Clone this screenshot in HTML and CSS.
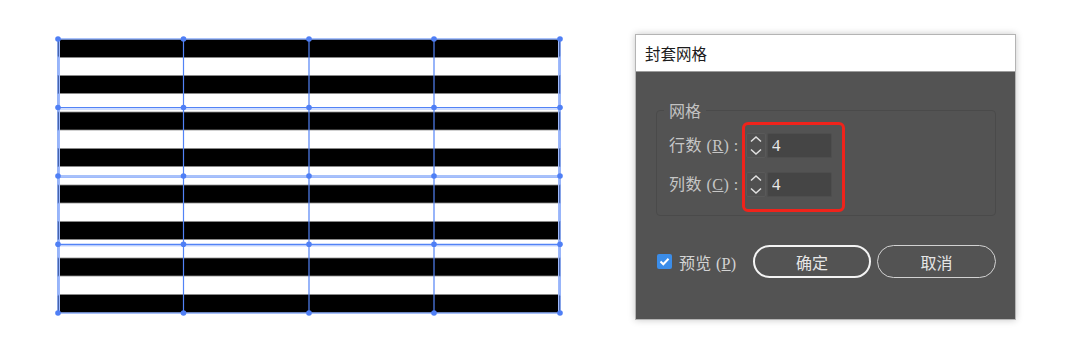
FILE: index.html
```html
<!DOCTYPE html>
<html lang="zh-CN">

<head>
    <meta charset="UTF-8">
    <meta name="viewport" content="width=device-width, initial-scale=1.0">
    <title>封套网格</title>
    <link rel="stylesheet" href="styles.css">
</head>

<body>
    <div class="canvas">
        <svg width="510" height="282" viewBox="-4 -4 510 282">
            <g fill="#000" stroke="#8c8c8c" stroke-width="0.8">
                <rect x="0" y="0.5" width="502" height="18" rx="2"></rect>
                <rect x="0" y="36.5" width="502" height="18"></rect>
                <rect x="0" y="73" width="502" height="18"></rect>
                <rect x="0" y="109.5" width="502" height="18"></rect>
                <rect x="0" y="146" width="502" height="18"></rect>
                <rect x="0" y="182.5" width="502" height="18"></rect>
                <rect x="0" y="219" width="502" height="18"></rect>
                <rect x="0" y="255.5" width="502" height="18" rx="2"></rect>
            </g>
            <g stroke="#9fbafc" stroke-width="1">
                <line x1="0" y1="70" x2="502" y2="70"></line>
                <line x1="0" y1="138.5" x2="502" y2="138.5"></line>
                <line x1="0" y1="206.8" x2="502" y2="206.8"></line>
                <line x1="1.5" y1="0" x2="1.5" y2="274"></line>
                <line x1="500.5" y1="0" x2="500.5" y2="274"></line>
            </g>
            <g stroke="#5283f6" stroke-width="1.2">
                <line x1="0" y1="0" x2="502" y2="0"></line>
                <line x1="0" y1="68.5" x2="502" y2="68.5"></line>
                <line x1="0" y1="137" x2="502" y2="137"></line>
                <line x1="0" y1="205.3" x2="502" y2="205.3"></line>
                <line x1="0" y1="274" x2="502" y2="274"></line>
                <line x1="0" y1="0" x2="0" y2="274"></line>
                <line x1="125.5" y1="0" x2="125.5" y2="274"></line>
                <line x1="251" y1="0" x2="251" y2="274"></line>
                <line x1="376" y1="0" x2="376" y2="274"></line>
                <line x1="502" y1="0" x2="502" y2="274"></line>
            </g>
            <g fill="#4f7ff5" id="dots"></g>
        </svg>
    </div>

    <div class="dialog">
        <div class="title">封套网格</div>
        <div class="panel">
            <fieldset class="group">
                <legend>网格</legend>
                <div class="grid-form">
                    <div class="labels">
                        <label>行数 (<u>R</u>)&nbsp;:</label>
                        <label>列数 (<u>C</u>)&nbsp;:</label>
                    </div>
                    <div class="mark">
                        <div class="control">
                            <span class="spin">
                                <svg width="20" height="25" viewBox="0 0 20 25">
                                    <path d="M5 8.5 L10 4 L15 8.5 M5 16.5 L10 21 L15 16.5" fill="none" stroke="#e2e2e2" stroke-width="1.5"></path>
                                </svg>
                            </span>
                            <input class="num" type="text" value="4">
                        </div>
                        <div class="control">
                            <span class="spin">
                                <svg width="20" height="25" viewBox="0 0 20 25">
                                    <path d="M5 8.5 L10 4 L15 8.5 M5 16.5 L10 21 L15 16.5" fill="none" stroke="#e2e2e2" stroke-width="1.5"></path>
                                </svg>
                            </span>
                            <input class="num" type="text" value="4">
                        </div>
                    </div>
                </div>
            </fieldset>
            <div class="actions">
                <div class="preview">
                    <span class="check">
                        <svg width="15" height="15" viewBox="0 0 15 15">
                            <path d="M3.5 7.5 L6.3 10.3 L11.5 4.8" fill="none" stroke="#fff" stroke-width="2"></path>
                        </svg>
                    </span>
                    <span class="preview-text">预览 (<u>P</u>)</span>
                </div>
                <button class="btn btn-ok">确定</button>
                <button class="btn btn-cancel">取消</button>
            </div>
        </div>
    </div>

    <script>
        const xs = [0, 125.5, 251, 376, 502];
        const ys = [0, 68.5, 137, 205.3, 274];
        const dots = document.getElementById('dots');
        ys.forEach(y => {
            xs.forEach(x => {
                const dot = document.createElementNS('http://www.w3.org/2000/svg', 'circle');
                dot.setAttribute('cx', x);
                dot.setAttribute('cy', y);
                dot.setAttribute('r', 2.8);
                dots.appendChild(dot);
            })
        })
    </script>
</body>

</html>
```

FILE: styles.css
```css
body {
    margin: 0;
    height: 349px;
    display: flex;
    align-items: flex-start;
    background-color: #fff;
    font-family: "Liberation Serif", "Noto Sans CJK SC", serif;
}

.canvas {
    margin: 35px 0 0 54px;
}

.canvas svg {
    display: block;
}

.dialog {
    margin: 34px 0 0 71px;
    width: 381px;
    height: 286px;
    box-sizing: border-box;
    border: 1px solid #b4b4b4;
    box-shadow: 0 0 7px rgba(0, 0, 0, 0.22);
    display: flex;
    flex-direction: column;
}

.title {
    height: 36px;
    line-height: 36px;
    padding-left: 9px;
    background-color: #fff;
    border-bottom: 1px solid #9c9c9c;
    font-family: "Noto Sans CJK SC", sans-serif;
    font-size: 15.5px;
    color: #1c1c1c;
}

.panel {
    flex: 1;
    background-color: #535353;
    padding: 28px 19px 0 20px;
}

.group {
    margin: 0;
    border: 1px solid #4a4a4a;
    border-radius: 4px;
    padding: 2px 12px 3px 12px;
}

.group legend {
    padding: 0 5px;
    margin-left: -5px;
    font-family: "Noto Sans CJK SC", sans-serif;
    font-size: 16px;
    line-height: 20px;
    color: #c2c2c2;
}

.grid-form {
    display: flex;
}

.labels {
    width: 73px;
    padding-top: 11px;
    display: flex;
    flex-direction: column;
    gap: 14px;
}

.labels label {
    height: 25px;
    line-height: 25px;
    font-size: 16px;
    color: #c6c6c6;
    white-space: nowrap;
    letter-spacing: 0.5px;
}

.mark {
    border: 3px solid #f0231b;
    border-radius: 6px;
    padding: 8px 10px 12px 1px;
    display: flex;
    flex-direction: column;
    gap: 14px;
}

.control {
    display: flex;
    gap: 1px;
    height: 25px;
}

.spin {
    width: 20px;
    height: 25px;
    box-sizing: border-box;
    background-color: #505050;
    border: 1px solid #595959;
    border-radius: 2px;
}

.spin svg {
    display: block;
    margin: -1px;
}

.num {
    width: 65px;
    height: 25px;
    box-sizing: border-box;
    margin: 0;
    padding: 0 0 0 4px;
    background-color: #454545;
    border: 1px solid #4e4e4e;
    border-radius: 2px;
    font-family: "Liberation Serif", serif;
    font-size: 17px;
    color: #e8e8e8;
    outline: none;
}

.actions {
    margin-top: 29px;
    padding-left: 1px;
    display: flex;
    align-items: center;
    gap: 6px;
}

.preview {
    width: 90px;
    display: flex;
    align-items: center;
    gap: 7px;
}

.check {
    width: 15px;
    height: 15px;
    border-radius: 2px;
    background-color: #3b8de9;
}

.check svg {
    display: block;
}

.preview-text {
    font-size: 16px;
    color: #d4d4d4;
    white-space: nowrap;
    letter-spacing: 0.3px;
}

.btn {
    height: 33px;
    box-sizing: border-box;
    border-radius: 17px;
    background: transparent;
    font-family: "Noto Sans CJK SC", sans-serif;
    font-size: 16px;
    color: #e6e6e6;
    padding: 0;
}

.btn-ok {
    width: 118px;
    border: 2px solid #f4f4f4;
}

.btn-cancel {
    width: 119px;
    border: 1.5px solid #d2d2d2;
}
```
